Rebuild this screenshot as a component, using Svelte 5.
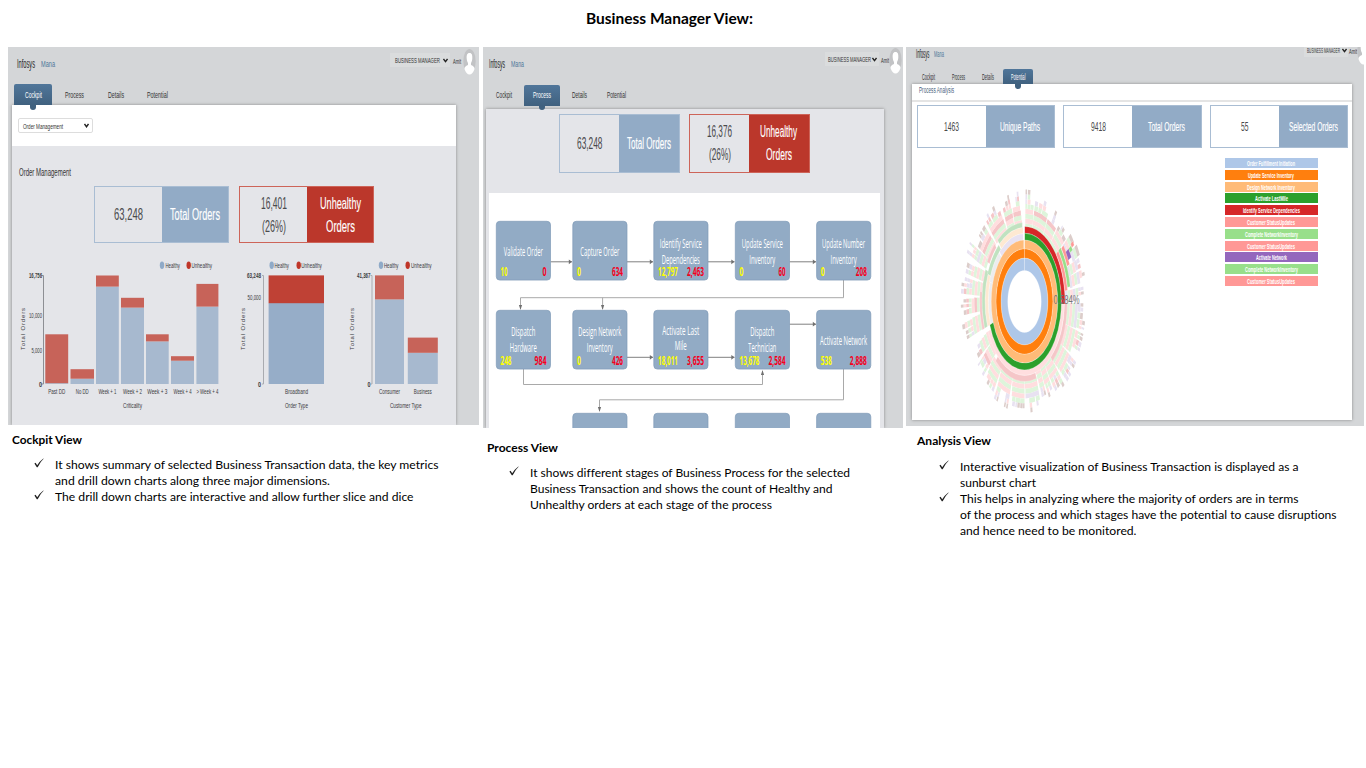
<script>
  const tabs = ['Cockpit', 'Process', 'Details', 'Potential'];

  const cockpitBars = [
    { x: 45.3, w: 22.9, top: 334.3, mid: 383.2, label: 'Past DD', lw: 17 },
    { x: 70.5, w: 23.5, top: 369.2, mid: 378.7, label: 'No DD', lw: 13 },
    { x: 96, w: 22.8, top: 275.5, mid: 286.6, label: 'Week + 1', lw: 18 },
    { x: 121, w: 23, top: 297.8, mid: 307.6, label: 'Week + 2', lw: 19 },
    { x: 146, w: 22.7, top: 334.3, mid: 341.4, label: 'Week + 3', lw: 20 },
    { x: 171, w: 23, top: 356.2, mid: 360.7, label: 'Week + 4', lw: 18 },
    { x: 196.4, w: 22, top: 283.9, mid: 306.6, label: '> Week + 4', lw: 22 }
  ];
  const customerBars = [
    { x: 375, w: 29, top: 275.4, mid: 299.4, label: 'Consumer', lw: 21 },
    { x: 407.8, w: 30, top: 337.6, mid: 352.8, label: 'Business', lw: 18 }
  ];
  const chartLegends = [
    { a: 162, ta: 165.5, b: 188.7, tb: 191.5 },
    { a: 271.7, ta: 274.5, b: 298.7, tb: 301.3 },
    { a: 381, ta: 384, b: 407.7, tb: 411 }
  ];

  const nodes = [
    { x: 496, y: 221, lines: [['Validate Order', 39]], ok: ['10', 7], bad: ['0', 4] },
    { x: 572.5, y: 221, lines: [['Capture Order', 39]], ok: ['0', 4], bad: ['634', 11] },
    { x: 653.5, y: 221, lines: [['Identify Service', 42], ['Dependencies', 38]], ok: ['12,797', 20], bad: ['2,463', 17] },
    { x: 735, y: 221, lines: [['Update Service', 41], ['Inventory', 26]], ok: ['0', 4], bad: ['60', 7] },
    { x: 816.3, y: 221, lines: [['Update Number', 43], ['Inventory', 26]], ok: ['0', 4], bad: ['208', 11] },
    { x: 496, y: 310, lines: [['Dispatch', 24], ['Hardware', 27]], ok: ['248', 11], bad: ['984', 12] },
    { x: 572.5, y: 310, lines: [['Design Network', 43], ['Inventory', 26]], ok: ['0', 4], bad: ['426', 11] },
    { x: 653.5, y: 310, lines: [['Activate Last', 37], ['Mile', 12]], ok: ['18,011', 20], bad: ['3,655', 17] },
    { x: 735, y: 310, lines: [['Dispatch', 24], ['Technician', 28]], ok: ['13,678', 20], bad: ['2,584', 17] },
    { x: 816.3, y: 310, lines: [['Activate Network', 47]], ok: ['538', 11], bad: ['2,888', 17] },
    { x: 572.5, y: 413 }, { x: 653.5, y: 413 }, { x: 735, y: 413 }, { x: 816.3, y: 413 }
  ];
  const arrows = [
    [550.5, 261.8, 572], [627, 261.8, 653], [708, 261.8, 734.5], [789.5, 261.8, 816],
    [627, 357.3, 653], [708, 357.3, 734.5], [789.5, 324.2, 816]
  ];

  const stages = [
    ['Order Fulfillment Initiation', '#aec7e8', 48], ['Update Service Inventory', '#ff7f0e', 46],
    ['Design Network Inventory', '#ffbb78', 48], ['Activate LastMile', '#2ca02c', 33],
    ['Identify Service Dependencies', '#d62728', 57], ['Customer StatusUpdates', '#ff9896', 48],
    ['Complete NetworkInventory', '#98df8a', 53], ['Customer StatusUpdates', '#ff9896', 48],
    ['Activate Network', '#9467bd', 31], ['Complete NetworkInventory', '#98df8a', 53],
    ['Customer StatusUpdates', '#ff9896', 48]
  ];

  // ring segment around the origin; angles in degrees clockwise from the top
  function arc(a0, a1, r0, r1) {
    const p = (a, r) => {
      const t = (a * Math.PI) / 180;
      return `${(r * Math.sin(t)).toFixed(2)},${(-r * Math.cos(t)).toFixed(2)}`;
    };
    const big = a1 - a0 > 180 ? 1 : 0;
    return `M${p(a0, r1)}A${r1},${r1} 0 ${big} 1 ${p(a1, r1)}L${p(a1, r0)}A${r0},${r0} 0 ${big} 0 ${p(a0, r0)}Z`;
  }

  let seed = 17;
  const rnd = () => {
    seed = (seed * 16807) % 2147483647;
    return seed / 2147483647;
  };

  const G = '#def5db', P = '#ffdedf', R = '#f5c6c8', L = '#e8e2f1', B = '#dccdca', C = '#fee9d2', D = '#c0e2c0', N = '#ececef';
  const outer = [];
  function branch(a0, a1, r, level, pal, limit) {
    const step = 5;
    if (r + step > limit || a1 - a0 < 0.7) return;
    const last = r + step * 2 > limit;
    const c = last ? (rnd() < 0.65 ? B : L) : level > 2 && rnd() < 0.22 ? (rnd() < 0.65 ? L : R) : pal[level % pal.length];
    outer.push([arc(a0, a1 - 0.2, r, r + step), c]);
    if (level < 3) {
      branch(a0, a1 - rnd() * 0.8, r + step, level + 1, pal, limit);
      return;
    }
    const n = a1 - a0 > 9 ? 3 : a1 - a0 > 4 ? 2 : 1;
    let s = a0;
    for (let i = 0; i < n; i++) {
      const e = i === n - 1 ? a1 : s + ((a1 - s) / (n - i)) * (0.7 + rnd() * 0.6);
      if (rnd() > 0.06) branch(s, e - rnd() * Math.min(1, (e - s) * 0.22), r + step, level + 1, pal, limit - (rnd() < 0.2 ? 4 : 0));
      s = e;
    }
  }
  [
    [1, 11, 75.5, [G, P], 116], [11, 27, 75.5, [G, P], 113], [27, 39, 75.5, [G, P], 112], [39, 51, 75.5, [G, P], 109],
    [51, 58, 91, [L, P, G], 114], [59, 66, 99, [L, G, P], 115], [66, 73, 86, [L, G, P], 116], [73, 81, 86, [L, P, G], 117], [82, 91, 76, [L, G, P], 112],
    [91, 107, 80, [G, P], 118], [107, 123, 80, [P, G], 116], [123, 139, 80, [G, P], 117],
    [139, 150, 74, [G, P], 116], [150, 157, 74, [G, P], 110], [157, 164, 74, [P, G], 106], [164, 180, 80, [G, P], 116], [180, 196, 80, [G, P], 111],
    [196, 212, 80, [G, P], 118], [212, 225, 80, [P, G], 115], [225, 236, 74, [P, G], 109], [236, 246, 74, [P, G], 104],
    [250, 262, 79, [P, G], 122], [263, 273, 79, [P, G, R], 122], [274, 284, 79, [P, G], 122],
    [285, 293, 79, [P, G], 117], [295, 303, 79, [G, P], 119], [303, 318, 79, [P, G, R], 112],
    [319, 336, 79, [P, G, R], 117], [337, 347, 79, [G, P, R], 116], [347, 357, 79, [P, G, R], 117]
  ].forEach(([a, b, r, pal, lim]) => branch(a, b, r, 0, pal, lim));

  const inner = [
    [arc(250, 287, 61, 67), N], [arc(250, 292, 67, 73), C], [arc(250, 294, 73, 79), D], [arc(250, 277, 79, 83), R],
    [arc(287, 316, 61, 68), N], [arc(292, 320, 68, 74), D], [arc(300, 316, 75, 80), R],
    [arc(317, 358, 61, 68), L], [arc(321, 358, 68, 74), C], [arc(321, 357, 74, 79), D],
    [arc(90, 246, 68.3, 74), P], [arc(91, 139, 74, 79.5), R], [arc(164, 222, 74, 80), R],
    [arc(0, 359.9, 31, 43.4), '#aec7e8'], [arc(0, 359.9, 43.4, 52.8), '#ff7f0e'],
    [arc(0, 359.9, 52.8, 61.6), '#ffbb78'], [arc(0, 250, 61.6, 68.4), '#2ca02c'],
    [arc(0, 92, 68.4, 75), '#d62728'], [arc(51, 82, 75.5, 80.5), '#ff9896'],
    [arc(51, 80, 80.8, 86), '#98df8a'], [arc(52, 66, 86.5, 91.5), '#ff9896'],
    [arc(57, 63, 91, 97.5), '#9467bd'], [arc(57, 60, 97.5, 103), '#98df8a'], [arc(56, 58.5, 103, 108), '#ff9896']
  ];

  const notes = [
    { title: ['Cockpit View', 70], items: [
      [['It shows summary of selected Business Transaction data, the key metrics', 383.5], ['and drill down charts along three major dimensions.', 275]],
      [['The drill down charts are interactive and allow further slice and dice', 358.5]] ] },
    { title: ['Process View', 71], items: [
      [['It shows different stages of Business Process for the selected', 320], ['Business Transaction and shows the count of Healthy and', 302.5], ['Unhealthy orders at each stage of the process', 242]] ] },
    { title: ['Analysis View', 74], items: [
      [['Interactive visualization of Business Transaction is displayed as a', 338.5], ['sunburst chart', 76]],
      [['This helps in analyzing where the majority of orders are in terms', 338.5], ['of the process and which stages have the potential to cause disruptions', 376.5], ['and hence need to be monitored.', 176.5]] ] }
  ];
</script>

{#snippet fit(text, w, size, h, cls = '')}
  <svg class="fit {cls}" width={w} height={h}>
    <text x="0" y={h / 2 + size * 0.36} font-size={size} textLength={w} lengthAdjust="spacingAndGlyphs">{text}</text>
  </svg>
{/snippet}

{#snippet label(text, x, y, w, size, cls = '')}
  <text class={cls} {x} {y} font-size={size} textLength={w} lengthAdjust="spacingAndGlyphs">{text}</text>
{/snippet}

{#snippet header(userW, logoW, manaW)}
  <header>
    <div class="brand">
      {@render fit('Infosys', logoW, 12, 14, 'logo')}
      {@render fit('Mana', manaW, 9.5, 14, 'mana')}
    </div>
    <div class="user">
      <div class="role">
        {@render fit('BUSINESS MANAGER', userW, 8, 12)}
        <svg width="5" height="5" viewBox="0 0 5 5"><path d="M.5 1 2.5 3.7 4.5 1" fill="none" stroke="#222" stroke-width="1.3" /></svg>
      </div>
      {@render fit('Amit', 8, 7.5, 12)}
      <svg class="avatar" width="13" height="26" viewBox="0 0 13 26">
        <ellipse cx="6.5" cy="12" rx="6.2" ry="12" fill="#c2c3c5" />
        <path d="M6.5 4C4 4 3.500 6.500 3.700 9.400 3.800 11.500 4.500 13 5 14v2C2.500 17 1.500 18 1.500 20 2.500 23.500 4.500 25.500 6.500 25.500s4-2 5-5.500c0-2-1-3-3.500-4v-2c.5-1 1.200-2.500 1.300-4.600C9.500 6.500 9 4 6.500 4Z" fill="#fff" />
      </svg>
    </div>
  </header>
{/snippet}

{#snippet nav(active, widths)}
  <nav>
    {#each tabs as t, i}
      <div class="tab" class:active={i === active}>
        {@render fit(t, widths[i], 9.5, 14)}
        {#if i === active}<i></i>{/if}
      </div>
    {/each}
  </nav>
{/snippet}

{#snippet card(values, names, red)}
  <div class="card" class:red>
    <div class="value">{#each values as v}{@render fit(v[0], v[1], v[2] ?? 16.5, v[3] ?? 23)}{/each}</div>
    <div class="name">{#each names as v}{@render fit(v[0], v[1], v[2] ?? 16, v[3] ?? 23, 'heavy')}{/each}</div>
  </div>
{/snippet}

{#snippet note(n)}
  <section class="note">
    <h2>{@render fit(n.title[0], n.title[1], 12, 16)}</h2>
    <ul>
      {#each n.items as item}
        <li>
          <svg class="check" width="10" height="10" viewBox="0 0 10 10"><path d="M.4 5.600 1.600 4.800 3.200 7.300Q5.500 3.300 9.300.4L9.600.8Q6.200 4 3.700 9.200L2.800 9.300Z" fill="#222" /></svg>
          <div>{#each item as l}{@render fit(l[0], l[1], 12.2, 16)}{/each}</div>
        </li>
      {/each}
    </ul>
  </section>
{/snippet}

<main>
  <h1>{@render fit('Business Manager View:', 167, 15, 20)}</h1>
  <div class="columns">
    <article class="cockpit">
      <div class="screen">
        {@render header(45, 18, 14)}
        {@render nav(0, [17, 19, 16, 21])}
        <div class="content">
          <div class="filter">
            <div class="select">{@render fit('Order Management', 40, 7.5, 12)}
              <svg width="5" height="5" viewBox="0 0 5 5"><path d="M.5 1 2.500 3.700 4.500 1" fill="none" stroke="#222" stroke-width="1.400" /></svg>
            </div>
          </div>
          <div class="caption">{@render fit('Order Management', 52, 10, 14)}</div>
          <div class="cards">
            {@render card([['63,248', 29]], [['Total Orders', 50]], false)}
            {@render card([['16,401', 26], ['(26%)', 24]], [['Unhealthy', 41], ['Orders', 29]], true)}
          </div>
          <svg class="charts" width="444" height="181" viewBox="12 243 444 181">
            {#each chartLegends as l}
              <ellipse cx={l.a} cy="265.300" rx="2.200" ry="3.700" fill="#8faac8" />
              {@render label('Healthy', l.ta, 268, 14.5, 7.5)}
              <ellipse cx={l.b} cy="265.300" rx="2.200" ry="3.700" fill="#bf3528" />
              {@render label('Unhealthy', l.tb, 268, 20.5, 7.5)}
            {/each}
            {#each cockpitBars as b}
              <rect x={b.x} y={b.mid} width={b.w} height={384 - b.mid} fill="#a7b9cf" />
              <rect x={b.x} y={b.top} width={b.w} height={b.mid - b.top} fill="#c76359" />
              {@render label(b.label, b.x + b.w / 2 - b.lw / 2, 394, b.lw, 7.5)}
            {/each}
            <rect x="268.600" y="303" width="55.400" height="81" fill="#96adc8" />
            <rect x="268.600" y="275.400" width="55.400" height="27.800" fill="#bf4135" />
            {#each customerBars as b}
              <rect x={b.x} y={b.mid} width={b.w} height={384 - b.mid} fill="#a7b9cf" />
              <rect x={b.x} y={b.top} width={b.w} height={b.mid - b.top} fill="#c76359" />
              {@render label(b.label, b.x + b.w / 2 - b.lw / 2, 394, b.lw, 7.5)}
            {/each}
            {@render label('Broadband', 285, 394, 23, 7.5)}
            {@render label('Criticality', 123, 407.5, 19, 8)}
            {@render label('Order Type', 285, 407.5, 23, 8)}
            {@render label('Customer Type', 390, 407.5, 31.5, 8)}
            <path d="M41.500 275.500h2V384h-2" fill="none" stroke="#8d8f94" />
            <path d="M262 275.500h1.500V384H262M370.500 275.500h1.500V384h-1.500" fill="none" stroke="#a9abb0" />
            {@render label('16,756', 29, 277.5, 13, 7.5, 'bold')}
            {@render label('10,000', 29, 317.5, 13, 7.5)}
            {@render label('5,000', 31.5, 352.5, 10.5, 7.5)}
            {@render label('0', 39, 386.5, 3, 7.5, 'bold')}
            {@render label('63,248', 247, 277.5, 14, 7.5, 'bold')}
            {@render label('50,000', 247.5, 299.5, 13.5, 7.5)}
            {@render label('0', 258, 386.5, 3, 7.5, 'bold')}
            {@render label('41,367', 357, 277.5, 13.5, 7.5, 'bold')}
            {@render label('0', 367.5, 386.5, 3, 7.5, 'bold')}
            {#each [25, 244.5, 353.500] as x}
              <text transform="translate({x} 350) rotate(-90)" font-size="6" textLength="42" lengthAdjust="spacing">Total Orders</text>
            {/each}
          </svg>
        </div>
      </div>
      {@render note(notes[0])}
    </article>

    <article class="process">
      <div class="screen">
        {@render header(43, 16, 13)}
        {@render nav(1, [16, 18, 15, 19])}
        <div class="content">
          <div class="cards">
            {@render card([['63,248', 25.5]], [['Total Orders', 44]], false)}
            {@render card([['16,376', 25], ['(26%)', 22]], [['Unhealthy', 37], ['Orders', 26]], true)}
          </div>
          <svg class="flow" width="391" height="235" viewBox="489 193 391 235">
            <g fill="none" stroke="#a9a9a9">
              {#each arrows as a}<path d="M{a[0]} {a[1]}H{a[2]}" stroke="#808080" />{/each}
              <path d="M843.500 280v17.700H520.500V309M602.600 297.700V309M523.500 369v15.500H762.500V371M843.500 369v30.800H599.500V411" />
            </g>
            <g fill="#707070">
              {#each arrows as a}<path d="M{a[2]} {a[1]}l-3.200-2.400v4.800z" />{/each}
              <path d="M520.500 310l-1.600-5h3.200zM602.600 310l-1.600-5h3.200zM762.500 370l-1.600 5h3.200zM599.500 412l-1.600-5h3.200z" />
            </g>
            {#each nodes as n}
              <rect x={n.x + 0.3} y={n.y + 0.3} width="54.200" height="58.800" rx="3.500" fill="#92abc5" stroke="#7f9bb8" stroke-width=".7" />
              {#if n.lines}
                {#each n.lines as l, i}
                  <text class="node" x={n.x + 27.3 - l[1] / 2} y={n.y + (n.lines.length === 1 ? 35 : (n.y === 310 && n.x !== 653.5 ? 26 : n.y === 310 ? 24.8 : 27)) + i * 15.5} font-size="12" textLength={l[1]} lengthAdjust="spacingAndGlyphs">{l[0]}</text>
                {/each}
                <text class="num" x={n.x + 4.5} y={n.y + 55.300} fill="#ff0" textLength={n.ok[1]} lengthAdjust="spacingAndGlyphs">{n.ok[0]}</text>
                <text class="num" x={n.x + 50.5 - n.bad[1]} y={n.y + 55.300} fill="#f5001c" textLength={n.bad[1]} lengthAdjust="spacingAndGlyphs">{n.bad[0]}</text>
              {/if}
            {/each}
          </svg>
        </div>
      </div>
      {@render note(notes[1])}
    </article>

    <article class="analysis">
      <div class="screen">
        {@render header(33, 13.5, 10)}
        {@render nav(3, [13, 13, 12, 14.5])}
        <div class="content">
          <div class="heading">{@render fit('Process Analysis', 35, 8.5, 12)}</div>
          <div class="cards">
            {@render card([['1463', 15, 13]], [['Unique Paths', 40, 12.5]], false)}
            {@render card([['9418', 15, 13]], [['Total Orders', 37, 12.5]], false)}
            {@render card([['55', 7.5, 13]], [['Selected Orders', 49, 12.5]], false)}
          </div>
          <div class="explore">
            <svg class="sunburst" width="130" height="240" viewBox="960 180 130 240">
              <g transform="translate(1024.500 301.500) scale(.535 .97)">
                {#each outer as [d, c]}<path {d} fill={c} />{/each}
              </g>
              <g transform="translate(1024.500 301.500) scale(.54 1)">
                {#each inner as [d, c]}<path {d} fill={c} stroke="#fff" stroke-width=".5" stroke-opacity=".6" />{/each}
                <path d="M-.8-53V-112" stroke="#fff" stroke-width="1.500" />
              </g>
              {@render label('0.584%', 1053.5, 304, 26, 12.5, 'percent')}
            </svg>
            <div class="stages">
              {#each stages as s}
                <div style:background={s[1]}>{@render fit(s[0], s[2], 7.3, 10, 'stage')}</div>
              {/each}
            </div>
          </div>
        </div>
      </div>
      {@render note(notes[2])}
    </article>
  </div>
</main>

<style>
  :global(body) { background: #fff; }
  main { width: 1366px; height: 768px; overflow: hidden; font-family: "Liberation Sans", sans-serif; box-sizing: border-box; }
  svg { display: block; flex: none; }
  .fit { overflow: visible; fill: #333; }
  h1 { margin: 0; height: 47px; padding: 9px 0 0 586px; box-sizing: border-box; font-weight: 700; font-family: Lato, sans-serif; }
  h1 .fit, h2 .fit { fill: #000; }
  .columns { display: flex; padding-left: 8px; align-items: flex-start; }
  .cockpit { width: 471px; margin-right: 4px; }
  .process { width: 420px; margin-right: 3px; }
  .analysis { width: 458px; }
  .screen { background: #d4d6d8; overflow: hidden; display: flex; flex-direction: column; }
  .cockpit .screen { height: 377.5px; }
  .process .screen { height: 381px; }
  .analysis .screen { height: 379px; }

  header { display: flex; justify-content: space-between; align-items: flex-start; box-sizing: border-box; flex: none; }
  .brand, .user, .role { display: flex; align-items: center; }
  .brand { padding: 10px 0 0 9px; gap: 6px; }
  .logo { fill: #222; }
  .mana { fill: #4d7698; }
  .user { gap: 3px; padding: 2px 3px 0 0; }
  .role { gap: 3px; padding: 1px 2px 1px 5px; margin-top: -4px; background: #dadcdd; }
  .user > .fit { margin-top: -2px; }
  .avatar { margin-left: -1px; }
  .cockpit header { height: 37px; }
  .process header { height: 38px; }
  .process .brand { padding-left: 6px; }
  .process .user { padding: 1px 1px 0 0; gap: 1.5px; }
  .process .role { gap: 1px; padding-left: 3px; }
  .analysis header { height: 22px; }
  .analysis .brand { padding: 0 0 0 10px; gap: 4px; }
  .analysis .user { margin-top: -10px; padding-right: 0; margin-right: -6px; gap: 1px; }
  .analysis .role { gap: 2px; padding: 1px 1px 1px 3px; }

  nav { display: flex; flex: none; padding-left: 6px; }
  .tab { display: flex; align-items: center; justify-content: center; width: 38px; height: 21px; margin-right: 3.5px; position: relative; z-index: 1; }
  .tab.active { background: linear-gradient(#50769a, #40617f); border-radius: 2px 2px 0 0; }
  .tab.active .fit { fill: #fff; }
  .tab i { position: absolute; left: 50%; bottom: -4.5px; width: 6px; height: 5px; margin-left: -3px; background: #40617f; border-radius: 0 0 3px 3px; }
  .process nav { padding-left: 3px; }
  .process .tab { width: 36px; margin-right: 1.5px; height: 20.5px; margin-bottom: 3.5px; }
  .analysis nav { padding-left: 7px; }
  .analysis .tab { width: 30px; height: 15px; margin-right: 0; }
  .analysis nav svg { transform: scaleY(.86); }

  .content { box-shadow: 0 0 3px #888; background: #e4e5e9; flex: 1; min-height: 0; }
  .cockpit .content { margin: 0 23px 0 4px; }
  .process .content { margin: 0 19px 0 2.5px; overflow: hidden; padding: 5px 4px 0 3.5px; }
  .analysis .content { margin: 0 12px 6.5px 6px; background: #fff; flex: 1; }

  .filter { background: #fff; height: 41px; padding: 13px 0 0 6px; box-sizing: border-box; }
  .select { width: 75px; height: 15px; border: 1px solid #ddd; border-radius: 2px; display: flex; align-items: center; justify-content: space-between; padding: 0 3px 0 4px; box-sizing: border-box; }
  .caption { padding: 18.5px 0 0 6.5px; height: 40px; box-sizing: border-box; }
  .cards { display: flex; }
  .card { display: grid; grid-template-columns: 1fr 1fr; border: 1px solid #a9bdd3; box-sizing: border-box; }
  .card.red { border-color: #cd6459; }
  .value, .name { display: flex; flex-direction: column; align-items: center; justify-content: center; }
  .value .fit { fill: #4a4a4c; }
  .name { background: #92abc6; }
  .red .name { background: #bb372b; }
  .name .fit { fill: #fff; }
  .heavy { stroke: #fff; stroke-width: .15px; }
  .cockpit .cards { padding-left: 82.4px; gap: 10px; }
  .cockpit .card { width: 135px; height: 57px; }
  .process .cards { padding-left: 70px; gap: 9.5px; }
  .process .card { width: 120.5px; height: 58.5px; }
  .charts { fill: #3a3a40; }
  .bold { font-weight: 700; }
  .flow { margin-top: 20.5px; background: #fff; }
  .node { fill: #fff; font-family: "Open Sans", sans-serif; }
  .num { font-family: "Open Sans", sans-serif; font-weight: 700; font-size: 12.5px; }

  .heading { height: 16px; border-bottom: 2px solid #e4e4e4; padding-left: 7px; box-sizing: content-box; }
  .heading .fit { fill: #47627c; }
  .analysis .cards { padding: 3px 0 0 4.5px; gap: 8.2px; }
  .analysis .card { width: 138.5px; height: 43px; }
  .explore { display: flex; justify-content: space-between; padding-left: 48px; }
  .sunburst { margin-top: 31.5px; }
  .percent { fill: #777; }
  .stages { display: flex; flex-direction: column; gap: 1.8px; padding: 10px 34.5px 0 0; }
  .stages div { width: 92.5px; height: 10px; display: flex; justify-content: center; align-items: center; }
  .stage { fill: #fff; font-weight: 700; }

  .note { font-family: Lato, sans-serif; font-variant-ligatures: none; }
  .note .fit { fill: #000; }
  h2 { margin: 0; height: 16px; font-weight: 700; }
  ul { margin: 0; padding: 9px 0 0 22px; list-style: none; }
  li { display: flex; align-items: flex-start; }
  .check { margin: 1px 10.5px 0 0; }
  .cockpit .note { padding: 7.5px 0 0 4px; }
  .process .note { padding: 12px 0 0 4px; }
  .analysis .note { padding: 7px 0 0 11px; }
  .analysis ul { padding-top: 10px; }
</style>
